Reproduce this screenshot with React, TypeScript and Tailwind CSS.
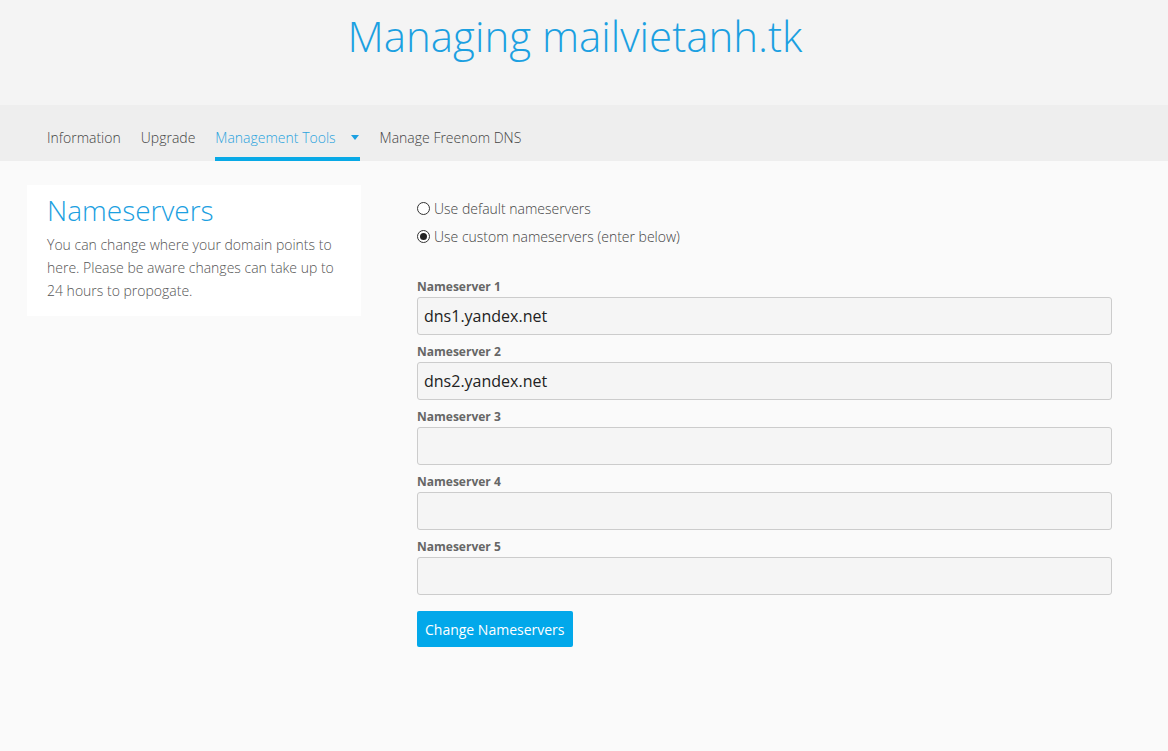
import React from "react";

const navItems = [
  { label: "Information", active: false },
  { label: "Upgrade", active: false },
  { label: "Management Tools", active: true, caret: true },
  { label: "Manage Freenom DNS", active: false },
];

const nameservers = ["dns1.yandex.net", "dns2.yandex.net", "", "", ""];

export default function App() {
  return (
    <div className="min-h-[751px] bg-[#fafafa] font-['Open_Sans',sans-serif] text-[#555]">
      <header className="flex h-[105px] justify-center bg-[#f4f4f4] pr-[18px] pt-[6px]">
        <h1 className="text-[42px] font-light leading-[60px] text-[#1ba0e1]">Managing mailvietanh.tk</h1>
      </header>

      <nav className="flex h-[56px] items-end gap-[20px] bg-[#eeeeee] px-[47px]">
        {navItems.map((item) => (
          <div
            key={item.label}
            className={
              item.active
                ? "flex h-full items-center gap-[15px] border-b-[4px] border-[#08a9e6] pt-[13px] text-[14px] font-light text-[#2aa3dd]"
                : "flex h-full items-center pb-[4px] pt-[13px] text-[14px] font-light text-[#444]"
            }
          >
            <span>{item.label}</span>
            {item.caret && (
              <svg width="8" height="5" viewBox="0 0 8 5" className="mr-[1px]">
                <path d="M0 0h8L4 5z" fill="#1ba0e1" />
              </svg>
            )}
          </div>
        ))}
      </nav>

      <main className="flex gap-[56px] px-[27px] pt-[24px]">
        <section className="h-[131px] w-[334px] shrink-0 bg-white px-[20px] pt-[6px]">
          <h2 className="text-[28px] font-light leading-[38px] text-[#1ba0e1]">Nameservers</h2>
          <p className="mt-[4px] text-[14px] font-light leading-[23px] text-[#555]">
            You can change where your domain points to here. Please be aware changes can take up to 24 hours to propogate.
          </p>
        </section>

        <form className="w-[695px] pt-[13px]">
          <div className="flex flex-col gap-[8px]">
            <label className="flex h-[20px] items-center gap-[4px] text-[14px] font-light text-[#444]">
              <span className="h-[13px] w-[13px] rounded-full border border-[#333] bg-white" />
              Use default nameservers
            </label>
            <label className="flex h-[20px] items-center gap-[4px] text-[14px] font-light text-[#444]">
              <span className="flex h-[13px] w-[13px] items-center justify-center rounded-full border border-[#333] bg-white">
                <span className="h-[7px] w-[7px] rounded-full bg-[#222]" />
              </span>
              Use custom nameservers (enter below)
            </label>
          </div>

          <div className="mt-[32px] flex flex-col">
            {nameservers.map((value, i) => (
              <div key={i} className="mb-[8px]">
                <div className="h-[17px] text-[12px] font-bold leading-[17px] text-[#666]">Nameserver {i + 1}</div>
                <input
                  type="text"
                  defaultValue={value}
                  className="mt-[2px] h-[38px] w-full rounded-[3px] border border-[#ccc] bg-[#f5f5f5] px-[6px] text-[16px] text-[#222] outline-none"
                />
              </div>
            ))}
          </div>

          <button
            type="button"
            className="mt-[8px] h-[36px] rounded-[2px] bg-[#02a8ea] px-[8px] text-[14px] text-white"
          >
            Change Nameservers
          </button>
        </form>
      </main>
    </div>
  );
}
